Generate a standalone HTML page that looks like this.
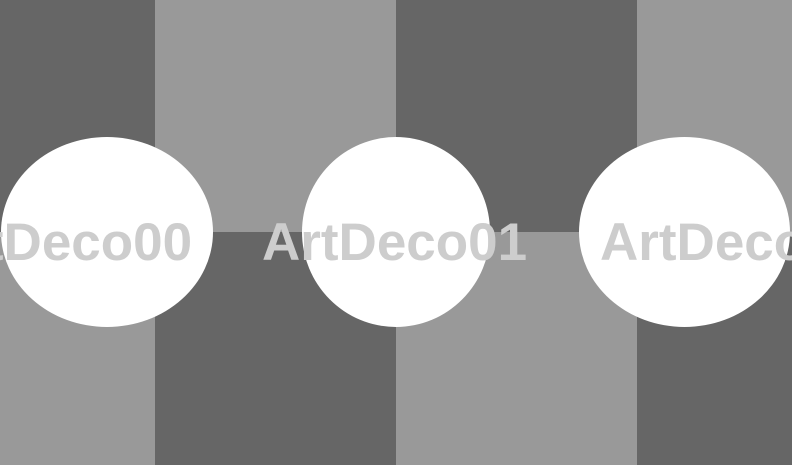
<!DOCTYPE html>
<html><head><style>
html,body{margin:0;padding:0;}
body{width:792px;height:465px;position:relative;overflow:hidden;background:#666;}
.c{position:absolute;}
.d{background:#666;}.l{background:#999;}
.e{position:absolute;background:#fff;border-radius:50%;}
.t{position:absolute;top:213px;font:bold 53px "Liberation Sans",Arial,sans-serif;color:#cdcdcd;white-space:nowrap;line-height:60px;}
</style></head><body>
<div class="c d" style="left:0;top:0;width:155px;height:232px"></div>
<div class="c l" style="left:155px;top:0;width:241px;height:232px"></div>
<div class="c d" style="left:396px;top:0;width:241px;height:232px"></div>
<div class="c l" style="left:637px;top:0;width:155px;height:232px"></div>
<div class="c l" style="left:0;top:232px;width:155px;height:233px"></div>
<div class="c d" style="left:155px;top:232px;width:241px;height:233px"></div>
<div class="c l" style="left:396px;top:232px;width:241px;height:233px"></div>
<div class="c d" style="left:637px;top:232px;width:155px;height:233px"></div>
<div class="e" style="left:1px;top:137px;width:212px;height:190px"></div>
<div class="e" style="left:302px;top:137px;width:188px;height:190px"></div>
<div class="e" style="left:579px;top:137px;width:211px;height:190px"></div>
<div class="t" style="left:-73px">ArtDeco00</div>
<div class="t" style="left:262px">ArtDeco01</div>
<div class="t" style="left:600px">ArtDeco02</div>
</body></html>
